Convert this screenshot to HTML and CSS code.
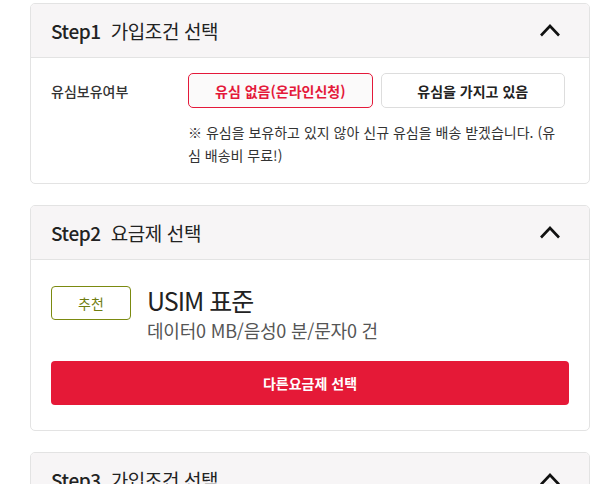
FILE: index.html
```html
<!DOCTYPE html>
<html lang="ko">
<head>
    <meta charset="UTF-8">
    <meta name="viewport" content="width=device-width, initial-scale=1.0">
    <title>가입 신청</title>
    <link rel="stylesheet" href="styles.css">
</head>
<body>
    <div class="steps">
        <section class="card">
            <div class="card-head">
                <h2><span class="step">Step1</span> 가입조건 선택</h2>
                <svg class="chevron" width="22" height="14" viewBox="0 0 22 14"><path d="M2 12.5 L11 3 L20 12.5" fill="none" stroke="#111" stroke-width="2.6"/></svg>
            </div>
            <div class="card-body usim-row">
                <div class="field-label">유심보유여부</div>
                <div class="field">
                    <div class="choices">
                        <button type="button" class="choice active">유심 없음(온라인신청)</button>
                        <button type="button" class="choice">유심을 가지고 있음</button>
                    </div>
                    <p class="note">※ 유심을 보유하고 있지 않아 신규 유심을 배송 받겠습니다. (유심 배송비 무료!)</p>
                </div>
            </div>
        </section>

        <section class="card">
            <div class="card-head">
                <h2><span class="step">Step2</span> 요금제 선택</h2>
                <svg class="chevron" width="22" height="14" viewBox="0 0 22 14"><path d="M2 12.5 L11 3 L20 12.5" fill="none" stroke="#111" stroke-width="2.6"/></svg>
            </div>
            <div class="card-body">
                <div class="plan">
                    <span class="badge">추천</span>
                    <div class="plan-info">
                        <div class="plan-name">USIM 표준</div>
                        <div class="plan-desc">데이터0 MB/음성0 분/문자0 건</div>
                    </div>
                </div>
                <button type="button" class="primary">다른요금제 선택</button>
            </div>
        </section>

        <section class="card">
            <div class="card-head">
                <h2><span class="step">Step3</span> 가입조건 선택</h2>
                <svg class="chevron" width="22" height="14" viewBox="0 0 22 14"><path d="M2 12.5 L11 3 L20 12.5" fill="none" stroke="#111" stroke-width="2.6"/></svg>
            </div>
            <div class="card-body">
                <div class="field-label">가입유형</div>
            </div>
        </section>
    </div>
</body>
</html>
```

FILE: styles.css
```css
body {
    margin: 0;
    background: #fff;
    font-family: "Noto Sans CJK KR", "Noto Sans", sans-serif;
    color: #222;
    overflow: hidden;
}

.steps {
    display: flex;
    flex-direction: column;
    gap: 21px;
    width: 560px;
    padding: 3px 0 0 30px;
}

.card {
    border: 1px solid #e3e3e3;
    border-radius: 5px;
    overflow: hidden;
    background: #fff;
}

.card-head {
    display: flex;
    align-items: center;
    justify-content: space-between;
    height: 53px;
    padding: 0 28px 0 20px;
    background: #f7f5f6;
    border-bottom: 1px solid #e3e3e3;
}

.card-head h2 {
    margin: 0;
    font-size: 19px;
    font-weight: 400;
    color: #222;
    letter-spacing: -0.4px;
}

.step {
    font-weight: 500;
    margin-right: 5px;
}

.chevron {
    display: block;
    margin-top: -2px;
}

.card-body {
    padding: 26px 20px 25px;
}

.usim-row {
    display: flex;
    padding-top: 15px;
    padding-bottom: 16px;
}

.field-label {
    width: 137px;
    flex-shrink: 0;
    font-size: 14px;
    font-weight: 500;
    color: #333;
    line-height: 36px;
}

.field {
    flex: 1;
    padding-right: 4px;
}

.choices {
    display: grid;
    grid-template-columns: 1fr 1fr;
    gap: 8px;
}

.choice {
    height: 35px;
    font-family: inherit;
    font-size: 14px;
    font-weight: 700;
    color: #222;
    background: #fff;
    border: 1px solid #ddd;
    border-radius: 5px;
}

.choice.active {
    color: #e4193a;
    border-color: #e4193a;
    background: #fbfafa;
}

.note {
    margin: 13px 0 0;
    font-size: 14px;
    line-height: 23px;
    color: #333;
}

.plan {
    display: flex;
    gap: 16px;
}

.badge {
    width: 78px;
    height: 32px;
    flex-shrink: 0;
    display: flex;
    align-items: center;
    justify-content: center;
    border: 1px solid #7b8a10;
    border-radius: 4px;
    color: #6f7d10;
    font-size: 14px;
}

.plan-name {
    font-size: 25px;
    line-height: 28px;
    color: #222;
    letter-spacing: -1px;
}

.plan-desc {
    margin-top: 3px;
    font-size: 18px;
    line-height: 26px;
    color: #555;
    letter-spacing: -0.2px;
}

.primary {
    display: block;
    width: 100%;
    height: 44px;
    margin-top: 18px;
    border: 0;
    border-radius: 4px;
    background: #e51937;
    color: #fff;
    font-family: inherit;
    font-size: 14px;
    font-weight: 700;
}
```
